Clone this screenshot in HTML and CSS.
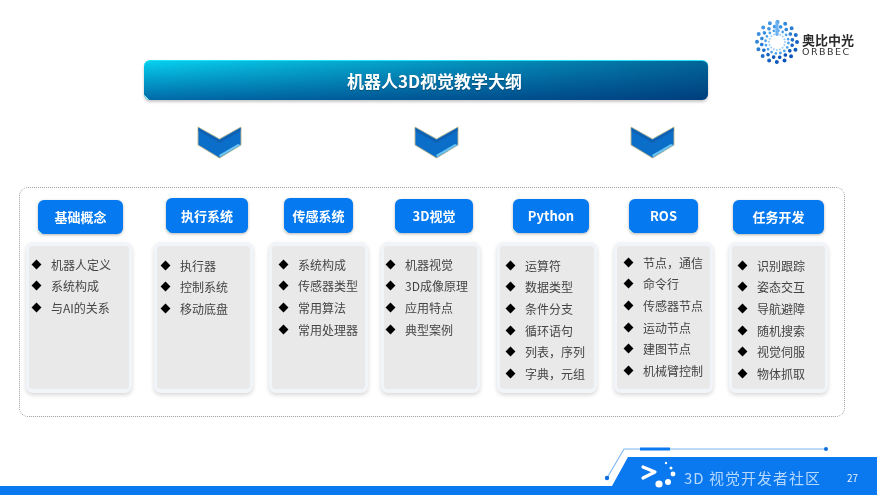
FILE: index.html
```html
<!DOCTYPE html>
<html lang="zh">
<head>
<meta charset="utf-8">
<title>机器人3D视觉教学大纲</title>
<link rel="stylesheet" href="styles.css">
</head>
<body>
<div class="slide">
  <header class="top">
    <div class="logo">
      <svg class="logo-mark" width="44" height="44" viewBox="0 0 44 44" aria-hidden="true">
        <defs>
          <linearGradient id="lg" x1="0" y1="0" x2="0.6" y2="1">
            <stop offset="0" stop-color="#4aa3ee"/>
            <stop offset="1" stop-color="#0a55b8"/>
          </linearGradient>
        </defs>
        <g fill="none" stroke-linecap="round">
          <circle cx="22" cy="22" r="20" stroke="url(#lg)" stroke-width="4" stroke-dasharray="0 7.85"/>
          <circle cx="22" cy="22" r="15.5" stroke="url(#lg)" stroke-width="3.6" stroke-dasharray="0 6.09" transform="rotate(12 22 22)"/>
          <circle cx="22" cy="22" r="11.5" stroke="#4ea4ee" stroke-width="2.8" stroke-dasharray="0 4.52" transform="rotate(5 22 22)"/>
          <circle cx="22" cy="22" r="8" stroke="#9accf6" stroke-width="2" stroke-dasharray="0 3.14"/>
        </g>
        <rect x="20.4" y="1" width="3.2" height="15" rx="1.6" fill="#6cb2f0"/>
      </svg>
      <div class="logo-text">
        <span class="logo-cn">奥比中光</span>
        <span class="logo-en">ORBBEC</span>
      </div>
    </div>
  </header>

  <h1 class="title"><span class="title-text">机器人3D视觉教学大纲</span></h1>

  <div class="arrows">
    <svg class="chevron" width="45" height="33" viewBox="0 0 45 33" aria-hidden="true">
      <path d="M1 1 L22.5 13 L44 1 V19 L22.5 32 L1 19 Z" fill="#0b6fc9" stroke="#bdb58c" stroke-width=".9"/>
      <path d="M1.5 2 L22.5 14 L43.5 2 V5 L22.5 17 L1.5 5 Z" fill="#1060b2"/>
      <path d="M23 31 L43.5 19 L41 18 L22 29 Z" fill="#6cc4f2"/>
    </svg>
    <svg class="chevron" width="45" height="33" viewBox="0 0 45 33" aria-hidden="true">
      <path d="M1 1 L22.5 13 L44 1 V19 L22.5 32 L1 19 Z" fill="#0b6fc9" stroke="#bdb58c" stroke-width=".9"/>
      <path d="M1.5 2 L22.5 14 L43.5 2 V5 L22.5 17 L1.5 5 Z" fill="#1060b2"/>
      <path d="M23 31 L43.5 19 L41 18 L22 29 Z" fill="#6cc4f2"/>
    </svg>
    <svg class="chevron" width="45" height="33" viewBox="0 0 45 33" aria-hidden="true">
      <path d="M1 1 L22.5 13 L44 1 V19 L22.5 32 L1 19 Z" fill="#0b6fc9" stroke="#bdb58c" stroke-width=".9"/>
      <path d="M1.5 2 L22.5 14 L43.5 2 V5 L22.5 17 L1.5 5 Z" fill="#1060b2"/>
      <path d="M23 31 L43.5 19 L41 18 L22 29 Z" fill="#6cc4f2"/>
    </svg>
  </div>

  <section class="panel">
    <div class="col c1">
      <div class="head">基础概念</div>
      <ul class="card"><li>机器人定义</li><li>系统构成</li><li>与AI的关系</li></ul>
    </div>
    <div class="col c2">
      <div class="head">执行系统</div>
      <ul class="card"><li>执行器</li><li>控制系统</li><li>移动底盘</li></ul>
    </div>
    <div class="col c3">
      <div class="head">传感系统</div>
      <ul class="card"><li>系统构成</li><li>传感器类型</li><li>常用算法</li><li>常用处理器</li></ul>
    </div>
    <div class="col c4">
      <div class="head">3D视觉</div>
      <ul class="card"><li>机器视觉</li><li>3D成像原理</li><li>应用特点</li><li>典型案例</li></ul>
    </div>
    <div class="col c5">
      <div class="head">Python</div>
      <ul class="card"><li>运算符</li><li>数据类型</li><li>条件分支</li><li>循环语句</li><li>列表，序列</li><li>字典，元组</li></ul>
    </div>
    <div class="col c6">
      <div class="head">ROS</div>
      <ul class="card"><li>节点，通信</li><li>命令行</li><li>传感器节点</li><li>运动节点</li><li>建图节点</li><li>机械臂控制</li></ul>
    </div>
    <div class="col c7">
      <div class="head">任务开发</div>
      <ul class="card"><li>识别跟踪</li><li>姿态交互</li><li>导航避障</li><li>随机搜索</li><li>视觉伺服</li><li>物体抓取</li></ul>
    </div>
  </section>

  <footer class="foot">
    <svg class="foot-bg" width="877" height="65" viewBox="0 0 877 65" aria-hidden="true">
      <path d="M0 56 H612 L628 27 H877 V65 H0 Z" fill="#0a78ee"/>
      <path d="M607 48 L624 19 H826" fill="none" stroke="#7db6f4" stroke-width="1.1"/>
      <rect x="640" y="17.5" width="30" height="3" fill="#0a78ee"/>
      <circle cx="607" cy="48" r="2.2" fill="#0a6fdc"/>
      <circle cx="826" cy="19" r="2" fill="#0a6fdc"/>
      <path d="M643 37 L655 42 L643 48" fill="none" stroke="#fff" stroke-width="3.2" stroke-linecap="round" stroke-linejoin="round"/>
      <circle cx="659" cy="54" r="3.6" fill="#fff"/>
      <circle cx="668" cy="52" r="3" fill="#fff"/>
      <circle cx="673" cy="44" r="2.4" fill="#fff"/>
      <circle cx="671" cy="38" r="1.5" fill="#fff"/>
      <circle cx="666" cy="33" r="1.2" fill="#fff"/>
    </svg>
    <span class="brand">3D 视觉开发者社区</span>
    <span class="page-no">27</span>
  </footer>
</div>
</body>
</html>
```
FILE: styles.css
```css
* { box-sizing: border-box; }
html, body { margin: 0; padding: 0; background: #fff; }
body { font-family: "Noto Sans CJK SC", "Noto Sans", sans-serif; }

.slide {
  width: 877px;
  height: 495px;
  overflow: hidden;
  display: flex;
  flex-direction: column;
  filter: blur(.45px);
}

.top {
  height: 59px;
  display: flex;
  justify-content: flex-end;
  align-items: flex-start;
  padding: 20px 23px 0 0;
}
.logo { display: flex; align-items: center; gap: 3px; }
.logo-mark { display: block; }
.logo-text { display: flex; flex-direction: column; gap: 0; padding-top: 5px; }
.logo-cn { font-size: 13px; line-height: 14px; color: #2b2b2b; font-weight: 700; }
.logo-en { font-family: "DejaVu Sans", sans-serif; font-size: 9.5px; line-height: 10px; color: #333; letter-spacing: 1.5px; }

.title {
  margin: 1px 0 0 144px;
  width: 564px;
  height: 40px;
  border-radius: 6px;
  border-top: 1px solid #22e2f8;
  display: flex;
  align-items: center;
  justify-content: center;
  padding-left: 17px;
  font-size: 17px;
  font-weight: 700;
  color: #fff;
  background:
    linear-gradient(45deg, #8fe6f4 4px, transparent 4px),
    linear-gradient(to right, rgba(0,35,100,0), rgba(0,35,100,.62)),
    linear-gradient(to bottom, #07d0ee, #006aa8);
  box-shadow: 0 2px 3px rgba(0,0,0,.22);
}
.title-text { text-shadow: 0 1px 1px rgba(0,0,0,.25); }

.arrows {
  display: flex;
  gap: 171.5px;
  margin: 26px 0 0 197px;
}
.chevron { display: block; flex: none; }

.panel {
  margin: 28px 0 0 19px;
  width: 826px;
  height: 231px;
  border: 1px dotted #9e9e9e;
  border-radius: 9px;
  display: flex;
  align-items: flex-start;
  padding-left: 6px;
}

.col {
  height: 205px;
  display: flex;
  flex-direction: column;
  flex: none;
  width: 99px;
}
.head {
  height: 34px;
  border-radius: 6px;
  flex: none;
  display: flex;
  align-items: center;
  justify-content: center;
  color: #fff;
  font-size: 13px;
  font-weight: 700;
  background:
    linear-gradient(45deg, #86ece0 3px, transparent 3px),
    #0579ef;
  box-shadow: 0 1px 3px rgba(0,0,0,.3);
}
.card {
  list-style: none;
  margin: auto 0 0;
  height: 151px;
  padding: 7.4px 0 0;
  background: #e9e9e9;
  border: solid #f1f4f8;
  border-width: 4px 3px 4px 3px;
  border-radius: 7px;
  box-shadow: 0 2px 4px rgba(0,0,0,.16);
}
.card li {
  height: 21.7px;
  display: flex;
  align-items: center;
  font-size: 12px;
  color: #444;
  white-space: nowrap;
}
.card li::before {
  content: "";
  flex: none;
  width: 7px;
  height: 7px;
  margin-right: 11.5px;
  background: #000;
  transform: rotate(45deg);
}

.c1 { width: 106px; padding-top: 12px; }
.c1 .head { width: 85px; margin-left: 12px; }
.c1 .card li { padding-left: 3.5px; }

.c2 { margin-left: 22px; padding-top: 10px; }
.c2 .head { width: 82px; height: 35px; margin-left: 12px; }
.c2 .card { padding-top: 8.3px; }
.c2 .card li { padding-left: 4.5px; }

.c3 { margin-left: 16px; padding-top: 10px; }
.c3 .head { width: 69px; height: 35px; margin-left: 15px; }
.c3 .card li { padding-left: 7.5px; }

.c4 { margin-left: 13px; padding-top: 11px; }
.c4 .head { width: 78px; margin-left: 14px; }
.c4 .card li { padding-left: 2.5px; }

.c5 { width: 100px; margin-left: 17px; padding-top: 11px; }
.c5 .head { width: 76px; margin-left: 16px; }
.c5 .card { padding-top: 8.3px; }
.c5 .card li { padding-left: 6.5px; }

.c6 { margin-left: 17px; padding-top: 11px; }
.c6 .head { width: 69px; margin-left: 15px; }
.c6 .card { padding-top: 5.3px; }
.c6 .card li { padding-left: 7.5px; }

.c7 { margin-left: 16px; padding-top: 12px; }
.c7 .head { width: 91px; margin-left: 4px; }
.c7 .card { padding-top: 8.3px; }
.c7 .card li { padding-left: 6.5px; }

.foot {
  position: relative;
  margin-top: 13px;
  height: 65px;
  flex: none;
  display: flex;
  justify-content: flex-end;
  align-items: center;
  padding: 31px 19px 0 0;
}
.foot-bg { position: absolute; left: 0; top: 0; display: block; }
.brand {
  position: relative;
  margin-right: 26px;
  font-size: 15px;
  line-height: 20px;
  letter-spacing: 1px;
  color: #b5d8ff;
  font-weight: 400;
  white-space: nowrap;
}
.page-no {
  position: relative;
  font-size: 10px;
  line-height: 14px;
  color: #e6f1ff;
}
```
